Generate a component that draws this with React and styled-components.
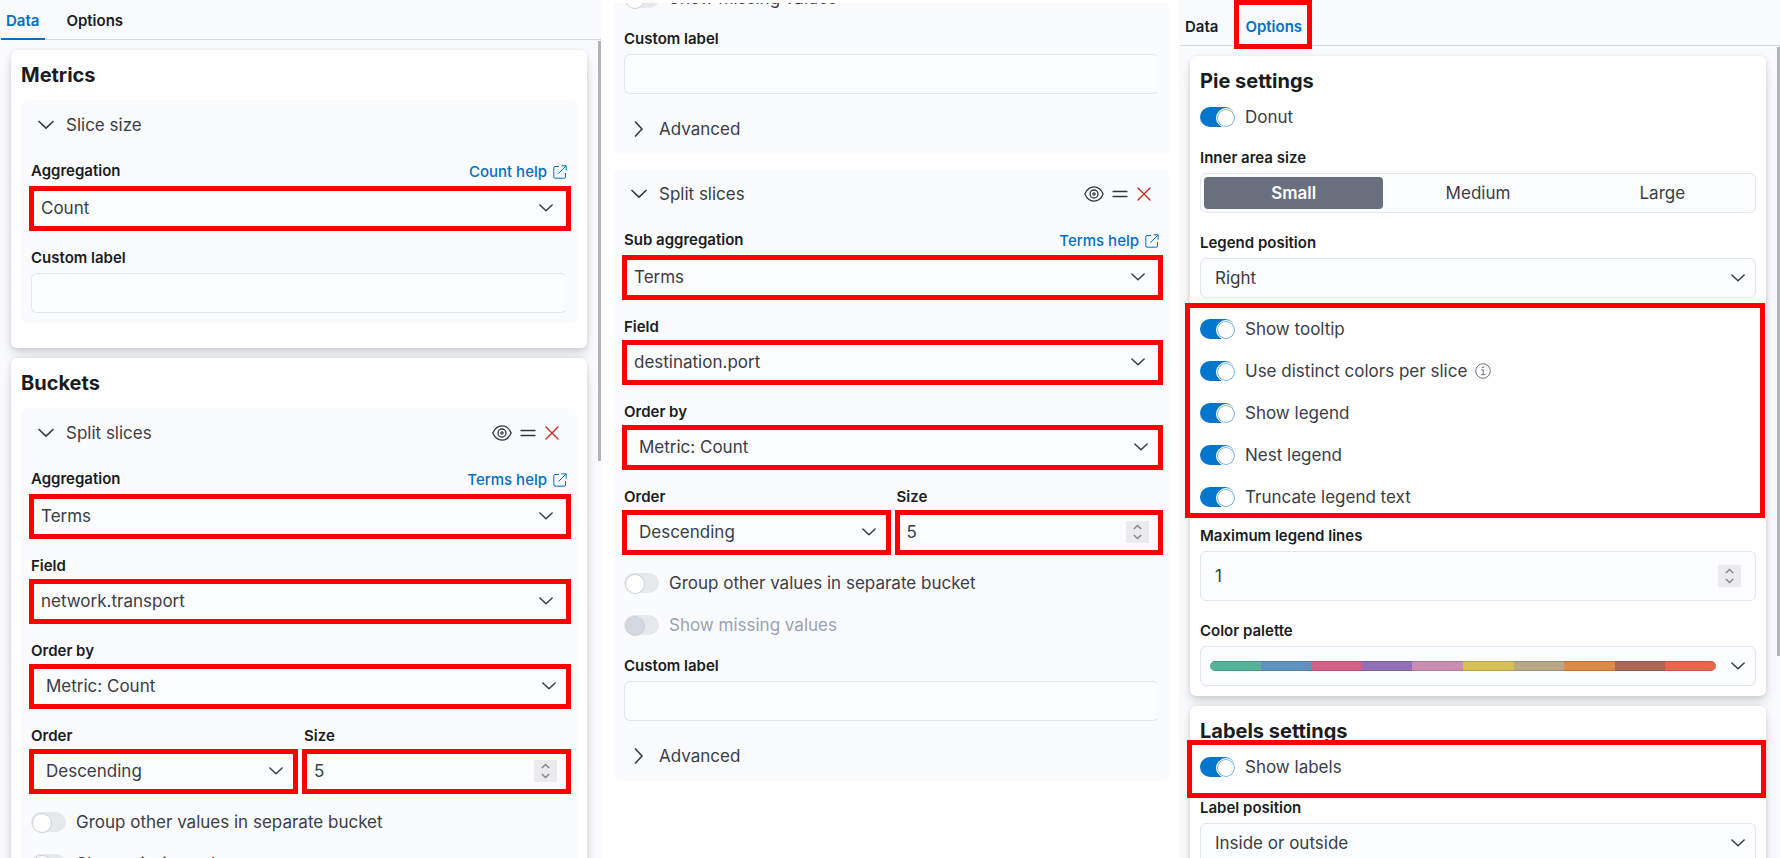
import React, { useId, useState } from "react";
import styled, { createGlobalStyle, css } from "styled-components";

const paletteColors = [
  "#54b399",
  "#6092c0",
  "#d36086",
  "#9170b8",
  "#ca8eae",
  "#d6bf57",
  "#b9a888",
  "#da8b45",
  "#aa6556",
  "#e7664c",
];

function Chevron({ size = 16, right }) {
  return (
    <svg width={size} height={size} viewBox="0 0 16 16" fill="none" aria-hidden="true">
      <path
        d={right ? "M4.5 1 L11 8 L4.5 15" : "M1 4.500 L8 11.200 L15 4.500"}
        stroke="currentColor"
        strokeWidth="1.7"
        strokeLinecap="round"
        strokeLinejoin="round"
      />
    </svg>
  );
}

function PopoutIcon() {
  return (
    <svg width="14" height="14" viewBox="0 0 14 14" fill="none" stroke="currentColor" aria-hidden="true">
      <path d="M6 1.5H2A1.2 1.2 0 0 0 .8 2.7V12A1.2 1.2 0 0 0 2 13.2H11.3A1.2 1.2 0 0 0 12.5 12V8M8.5.8H13.2V5.5M13 1L5.5 8.5" />
    </svg>
  );
}

function EyeIcon() {
  return (
    <svg width="20" height="16" viewBox="0 0 20 16" fill="none" stroke="currentColor" aria-hidden="true">
      <path
        d="M.8 8C2.8 3.5 6 .9 10 .9S17.2 3.500 19.200 8C17.200 12.500 14 15.100 10 15.100S2.800 12.500.8 8Z"
        strokeWidth="1.3"
      />
      <circle cx="10" cy="8" r="4" strokeWidth="1.3" />
      <circle cx="10" cy="8" r="1.2" strokeWidth="1.2" />
    </svg>
  );
}

function GrabIcon() {
  return (
    <svg width="16" height="16" viewBox="0 0 16 16" stroke="currentColor" aria-hidden="true">
      <path d="M.5 5.500H15.500M.5 10.500H15.500" strokeWidth="1.3" />
    </svg>
  );
}

function CrossIcon() {
  return (
    <svg width="16" height="16" viewBox="0 0 16 16" stroke="currentColor" aria-hidden="true">
      <path d="M2 2L14 14M14 2L2 14" strokeWidth="1.3" strokeLinecap="round" />
    </svg>
  );
}

function InfoIcon() {
  return (
    <svg width="16" height="16" viewBox="0 0 16 16" fill="none" stroke="currentColor" aria-hidden="true">
      <circle cx="8" cy="8" r="7.3" />
      <path d="M6.3 6.8H8.2V11.5M6 11.7H10.3" />
      <circle cx="8" cy="4.3" r=".5" fill="currentColor" />
    </svg>
  );
}

function StepperIcon() {
  return (
    <svg width="9" height="16" viewBox="0 0 9 16" fill="none" stroke="currentColor" aria-hidden="true">
      <path d="M.8 5L4.5 1.500L8.200 5M.8 11L4.500 14.500L8.200 11" strokeWidth="1.6" />
    </svg>
  );
}

function SelectField({ label, value, help, inset, marked }) {
  const id = useId();
  return (
    <FormRow>
      <LabelLine $tall={Boolean(help)}>
        <Label htmlFor={id}>{label}</Label>
        {help && (
          <HelpLink href="#help">
            {help}
            <PopoutIcon />
          </HelpLink>
        )}
      </LabelLine>
      <Control $marked={marked}>
        <Select id={id} $inset={inset} defaultValue={value}>
          <option>{value}</option>
        </Select>
        <SelectArrow $inset={inset}>
          <Chevron size={14} />
        </SelectArrow>
      </Control>
    </FormRow>
  );
}

function NumberField({ label, value, inset, marked, tall }) {
  const id = useId();
  return (
    <FormRow>
      <LabelLine>
        <Label htmlFor={id}>{label}</Label>
      </LabelLine>
      <Control $marked={marked}>
        <NumberInput id={id} type="number" $inset={inset} $tall={tall} defaultValue={value} />
        <Stepper $inset={inset}>
          <StepperIcon />
        </Stepper>
      </Control>
    </FormRow>
  );
}

function TextField({ label }) {
  const id = useId();
  return (
    <FormRow>
      <LabelLine>
        <Label htmlFor={id}>{label}</Label>
      </LabelLine>
      <TextInput id={id} type="text" />
    </FormRow>
  );
}

function Switch({ label, on = false, disabled, info }) {
  const [checked, setChecked] = useState(on);
  return (
    <SwitchLabel $disabled={disabled}>
      <SwitchInput
        type="checkbox"
        checked={checked}
        disabled={disabled}
        onChange={(e) => setChecked(e.target.checked)}
      />
      {label}
      {info && <InfoIcon />}
    </SwitchLabel>
  );
}

function BucketHeader() {
  return (
    <AccordionHeader>
      <AccordionButton type="button">
        <Chevron />
        Split slices
      </AccordionButton>
      <Actions>
        <IconButton type="button" aria-label="Disable bucket">
          <EyeIcon />
        </IconButton>
        <IconButton type="button" aria-label="Reorder bucket">
          <GrabIcon />
        </IconButton>
        <IconButton type="button" aria-label="Remove bucket" $danger>
          <CrossIcon />
        </IconButton>
      </Actions>
    </AccordionHeader>
  );
}

function TermsFields({ title, field }) {
  return (
    <>
      <SelectField label={title} value="Terms" help="Terms help" marked />
      <SelectField label="Field" value={field} marked />
      <SelectField label="Order by" value="Metric: Count" inset marked />
      <Columns>
        <SelectField label="Order" value="Descending" inset marked />
        <NumberField label="Size" value={5} marked />
      </Columns>
      <Switch label="Group other values in separate bucket" />
    </>
  );
}

function Advanced() {
  return (
    <AccordionButton type="button">
      <Chevron right />
      Advanced
    </AccordionButton>
  );
}

function DataPanel() {
  return (
    <Panel>
      <Tabs>
        <Tab type="button" $active>
          Data
        </Tab>
        <Tab type="button">Options</Tab>
      </Tabs>
      <Cards>
        <Card>
          <Title>Metrics</Title>
          <Accordion>
            <AccordionHeader>
              <AccordionButton type="button">
                <Chevron />
                Slice size
              </AccordionButton>
            </AccordionHeader>
            <Fields>
              <SelectField label="Aggregation" value="Count" help="Count help" marked />
              <TextField label="Custom label" />
            </Fields>
          </Accordion>
          <CardFooter />
        </Card>
        <Card>
          <Title>Buckets</Title>
          <Accordion>
            <BucketHeader />
            <Fields>
              <TermsFields title="Aggregation" field="network.transport" />
              <Switch label="Show missing values" />
            </Fields>
          </Accordion>
        </Card>
      </Cards>
      <ScrollThumb $top={41} $share={49} />
    </Panel>
  );
}

function BucketPanel() {
  return (
    <PlainPanel>
      <Accordion $scrolled>
        <Fields>
          <Switch label="Show missing values" />
          <TextField label="Custom label" />
          <Advanced />
        </Fields>
      </Accordion>
      <Accordion>
        <BucketHeader />
        <Fields>
          <TermsFields title="Sub aggregation" field="destination.port" />
          <Switch label="Show missing values" disabled />
          <TextField label="Custom label" />
          <Advanced />
        </Fields>
      </Accordion>
    </PlainPanel>
  );
}

function OptionsPanel() {
  const paletteId = useId();
  const [size, setSize] = useState("Small");
  return (
    <Panel $offset>
      <Tabs>
        <Tab type="button">Data</Tab>
        <Tab type="button" $active $marked>
          Options
        </Tab>
      </Tabs>
      <Cards>
        <Card>
          <Title>Pie settings</Title>
          <Fields>
            <Switch label="Donut" on />
            <FormRow>
              <LabelLine>
                <Label as="span">Inner area size</Label>
              </LabelLine>
              <ButtonGroup role="group" aria-label="Inner area size">
                {["Small", "Medium", "Large"].map((name) => (
                  <GroupButton
                    key={name}
                    type="button"
                    $selected={name === size}
                    onClick={() => setSize(name)}
                  >
                    {name}
                  </GroupButton>
                ))}
              </ButtonGroup>
            </FormRow>
            <SelectField label="Legend position" value="Right" inset />
            <LegendSwitches>
              <Switch label="Show tooltip" on />
              <Switch label="Use distinct colors per slice" on info />
              <Switch label="Show legend" on />
              <Switch label="Nest legend" on />
              <Switch label="Truncate legend text" on />
            </LegendSwitches>
            <NumberField label="Maximum legend lines" value={1} inset tall />
            <FormRow>
              <LabelLine>
                <Label htmlFor={paletteId}>Color palette</Label>
              </LabelLine>
              <PaletteButton id={paletteId} type="button">
                <PaletteBar>
                  {paletteColors.map((color) => (
                    <PaletteStop key={color} $color={color} />
                  ))}
                </PaletteBar>
                <Chevron size={14} />
              </PaletteButton>
            </FormRow>
          </Fields>
        </Card>
        <Card>
          <Title>Labels settings</Title>
          <Fields>
            <LabelSwitches>
              <Switch label="Show labels" on />
            </LabelSwitches>
            <SelectField label="Label position" value="Inside or outside" inset />
          </Fields>
        </Card>
      </Cards>
      <ScrollThumb $top={47} $share={71} />
    </Panel>
  );
}

export default function App() {
  return (
    <>
      <GlobalStyle />
      <Page>
        <DataPanel />
        <BucketPanel />
        <OptionsPanel />
      </Page>
    </>
  );
}

const GlobalStyle = createGlobalStyle`
  * {
    box-sizing: border-box;
  }
  body {
    margin: 0;
    background: #fff;
    color: #3a3d46;
    font-family: Inter, "Liberation Sans", sans-serif;
    font-size: 17px;
  }
  button, input, select {
    font: inherit;
    color: inherit;
  }
  svg {
    display: block;
    flex: none;
  }
`;

const markFrame = css`
  content: "";
  position: absolute;
  z-index: 2;
  border: 5px solid #f00;
  pointer-events: none;
`;

const Page = styled.main`
  display: grid;
  grid-template-columns: 601fr 578fr 601fr;
  grid-template-rows: 100%;
  height: 100vh;
  overflow: hidden;
`;

const Panel = styled.section`
  position: relative;
  min-width: 0;
  background: #f9fafd;
  padding-top: ${(p) => (p.$offset ? "6px" : "0")};
`;

const PlainPanel = styled.section`
  display: flex;
  flex-direction: column;
  gap: 15px;
  min-width: 0;
  padding: 3px 10px 0 13px;
`;

const ScrollThumb = styled.span`
  position: absolute;
  right: 0;
  top: ${(p) => p.$top}px;
  width: 3px;
  height: ${(p) => p.$share}%;
  background: #b1b3b9;
`;

const Tabs = styled.nav`
  display: flex;
  gap: 16px;
  height: 40px;
  margin-left: 1px;
  border-bottom: 1px solid #d3dae6;
`;

const Tab = styled.button`
  position: relative;
  height: 40px;
  padding: 2px 6px 0 5px;
  border: none;
  border-bottom: 2px solid ${(p) => (p.$active ? "#0071c2" : "transparent")};
  background: none;
  font-size: 15px;
  font-weight: 600;
  color: ${(p) => (p.$active ? "#0071c2" : "#1a1c21")};
  ${(p) =>
    p.$marked &&
    css`
      &::after {
        ${markFrame}
        inset: -6px -4px -5px -6px;
      }
    `}
`;

const Cards = styled.div`
  display: flex;
  flex-direction: column;
  gap: 10px;
  padding: 10px 14px 0 11px;
`;

const Card = styled.section`
  padding: 10px;
  border-radius: 6px;
  background: #fff;
  box-shadow: 0 1px 4px rgba(0, 0, 0, 0.08), 0 3px 8px rgba(0, 0, 0, 0.06),
    0 6px 12px rgba(0, 0, 0, 0.05), 0 15px 15px rgba(0, 0, 0, 0.04);
`;

const CardFooter = styled.div`
  height: 15px;
`;

const Title = styled.h2`
  margin: 0 0 10px;
  font-size: 20px;
  line-height: 30px;
  font-weight: 700;
  color: #1a1c21;
`;

const Accordion = styled.div`
  padding: 10px;
  border-radius: 6px;
  background: #fafbfd;
  ${(p) =>
    p.$scrolled &&
    css`
      flex: none;
      padding-top: 0;
      border-radius: 0;
      overflow: hidden;
      > :first-child {
        margin-top: -16px;
      }
    `}
`;

const AccordionHeader = styled.div`
  display: flex;
  align-items: center;
  justify-content: space-between;
  margin-bottom: 21px;
`;

const AccordionButton = styled.button`
  display: flex;
  align-items: center;
  gap: 12px;
  height: 30px;
  padding: 0 7px;
  border: none;
  background: none;
`;

const Actions = styled.div`
  display: flex;
  align-items: center;
  gap: 8px;
  padding-right: 7px;
`;

const IconButton = styled.button`
  padding: 0;
  border: none;
  background: none;
  color: ${(p) => (p.$danger ? "#bd271e" : "#343741")};
`;

const Fields = styled.div`
  display: flex;
  flex-direction: column;
  gap: 20px;
`;

const FormRow = styled.div`
  min-width: 0;
`;

const Columns = styled.div`
  display: grid;
  grid-template-columns: 1fr 1fr;
  gap: 10px;
`;

const LabelLine = styled.div`
  display: flex;
  justify-content: space-between;
  height: ${(p) => (p.$tall ? "22px" : "20px")};
  margin-bottom: 5px;
`;

const Label = styled.label`
  font-size: 15px;
  line-height: 20px;
  font-weight: 600;
  color: #1a1c21;
`;

const HelpLink = styled.a`
  display: flex;
  align-items: center;
  gap: 6px;
  font-size: 15px;
  line-height: 22px;
  font-weight: 500;
  color: #0071c2;
  text-decoration: none;
`;

const Control = styled.div`
  position: relative;
  ${(p) =>
    p.$marked &&
    css`
      &::after {
        ${markFrame}
        inset: -2px -4px -3px -2px;
      }
    `}
`;

const box = css`
  display: block;
  width: 100%;
  height: 40px;
  border: 1px solid #e3e6ed;
  border-radius: 6px;
  background: #fbfcfd;
`;

const TextInput = styled.input`
  ${box}
  border-right-color: #f8f9fb;
  padding: 0 10px;
`;

const Select = styled.select`
  ${box}
  appearance: none;
  padding: 0 ${(p) => (p.$inset ? "14px" : "9px")};
`;

const SelectArrow = styled.span`
  position: absolute;
  right: ${(p) => (p.$inset ? "11px" : "14px")};
  top: 13px;
  pointer-events: none;
`;

const NumberInput = styled.input`
  ${box}
  height: ${(p) => (p.$tall ? "50px" : "40px")};
  padding: 0 ${(p) => (p.$inset ? "14px" : "9px")};
  appearance: textfield;
  &::-webkit-inner-spin-button {
    display: none;
  }
`;

const Stepper = styled.span`
  position: absolute;
  top: 0;
  bottom: 0;
  right: ${(p) => (p.$inset ? "15px" : "10px")};
  display: flex;
  align-items: center;
  justify-content: center;
  width: 23px;
  height: 22px;
  margin: auto 0;
  background: #ebebee;
  color: #85878c;
`;

const SwitchLabel = styled.label`
  display: flex;
  align-items: center;
  gap: 10px;
  height: 22px;
  color: ${(p) => (p.$disabled ? "#98a2b3" : "inherit")};
  svg {
    margin-left: -2px;
    color: #69707d;
  }
`;

const SwitchInput = styled.input`
  appearance: none;
  position: relative;
  flex: none;
  width: 35px;
  height: 20px;
  margin: 0;
  border-radius: 10px;
  background: #e6e8ec;
  &::before {
    content: "";
    position: absolute;
    top: 1px;
    left: 1px;
    width: 18px;
    height: 18px;
    border: 1px solid #ccd0d8;
    border-radius: 50%;
    background: #fff;
  }
  &:disabled::before {
    background: #d3d8e2;
  }
  &:checked {
    background: #0077cc;
  }
  &:checked::before {
    left: 16px;
    border-color: #fff;
    box-shadow: inset 0 0 0 1px #66ade0;
  }
`;

const ButtonGroup = styled.div`
  ${box}
  display: grid;
  grid-template-columns: repeat(3, 1fr);
  gap: 5px;
  padding: 3px;
`;

const GroupButton = styled.button`
  padding: 0;
  border: none;
  border-radius: 4px;
  background: ${(p) => (p.$selected ? "#69707d" : "transparent")};
  color: ${(p) => (p.$selected ? "#fff" : "inherit")};
  font-weight: ${(p) => (p.$selected ? 600 : 400)};
`;

const LegendSwitches = styled.div`
  position: relative;
  display: flex;
  flex-direction: column;
  gap: 20px;
  margin-bottom: -2px;
  &::after {
    ${markFrame}
    inset: -15px -9px -10px -15px;
  }
`;

const LabelSwitches = styled.div`
  position: relative;
  &::after {
    ${markFrame}
    inset: -16px -10px -20px -13px;
  }
`;

const PaletteButton = styled.button`
  ${box}
  display: flex;
  align-items: center;
  gap: 15px;
  padding: 0 10px 0 9px;
`;

const PaletteBar = styled.span`
  display: flex;
  flex: 1;
  height: 10px;
  border-radius: 5px;
  overflow: hidden;
`;

const PaletteStop = styled.span`
  flex: 1;
  background: ${(p) => p.$color};
  box-shadow: inset 0 1px rgba(0, 0, 0, 0.15), inset 0 -1px rgba(0, 0, 0, 0.15);
`;
